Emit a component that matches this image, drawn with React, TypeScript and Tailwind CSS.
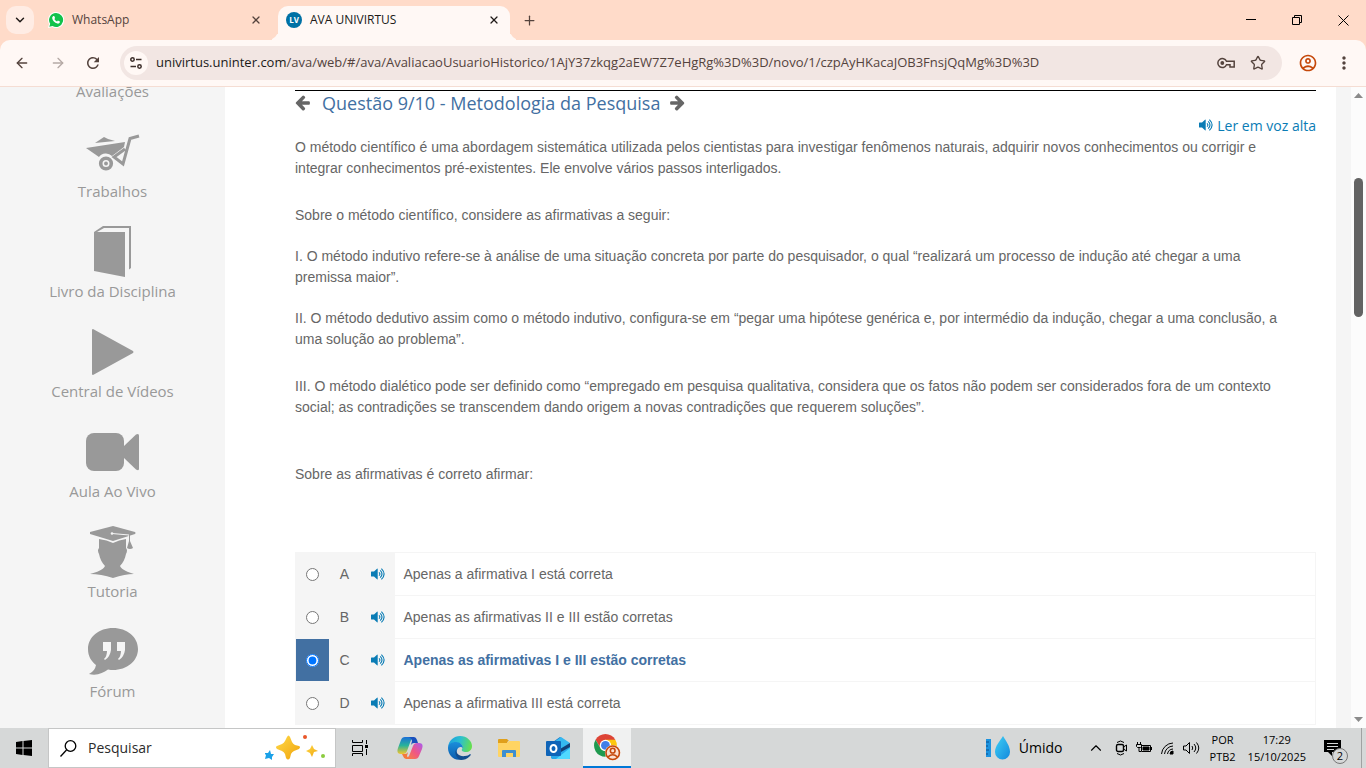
import type { ReactNode } from "react";
import { ArrowLeft, ArrowRight, ChevronDown, ChevronUp, Plus, Star, X } from "lucide-react";
import {
  MdOutlineAccountCircle,
  MdMoreVert,
  MdRefresh,
} from "react-icons/md";

const SIDEBAR_ITEMS: { label: string; icon: ReactNode }[] = [
  { label: "Trabalhos", icon: <WheelbarrowIcon /> },
  { label: "Livro da Disciplina", icon: <BookIcon /> },
  { label: "Central de Vídeos", icon: <PlayIcon /> },
  { label: "Aula Ao Vivo", icon: <CameraIcon /> },
  { label: "Tutoria", icon: <TutorIcon /> },
  { label: "Fórum", icon: <ForumIcon /> },
];

const OPTIONS = [
  { letter: "A", text: "Apenas a afirmativa I está correta" },
  { letter: "B", text: "Apenas as afirmativas II e III estão corretas" },
  { letter: "C", text: "Apenas as afirmativas I e III estão corretas" },
  { letter: "D", text: "Apenas a afirmativa III está correta" },
];

const SELECTED = "C";

function WheelbarrowIcon() {
  return (
    <svg width="54" height="37" viewBox="0 0 54 37" fill="#999">
      <path d="m9 9 6-4 3-2 4 2 7 2z" />
      <path d="M0 14 39 8l-1 5-12 9a8.500 8.500 0 0 0-13 1z" />
      <circle cx="20" cy="29.500" r="5.300" fill="none" stroke="#999" strokeWidth="3.600" />
      <circle cx="20" cy="29.500" r="1.900" />
      <path
        d="M53 2 44 4.500 37 30l-9-7 11-8"
        fill="none"
        stroke="#999"
        strokeWidth="3"
      />
    </svg>
  );
}

function BookIcon() {
  return (
    <svg width="38" height="52" viewBox="0 0 38 52" fill="#999">
      <path d="M0 6h31v45L0 45z" />
      <path d="M0 6 9 0h28v42l-2 1.500V2H10L3 6z" />
    </svg>
  );
}

function PlayIcon() {
  return (
    <svg width="42" height="46" viewBox="0 0 42 46" fill="#999">
      <path d="M0 1Q0 0 1 0L41 22q1 1 0 2L1 46Q0 46 0 45z" />
    </svg>
  );
}

function CameraIcon() {
  return (
    <svg width="54" height="38" viewBox="0 0 54 38" fill="#999">
      <rect width="38" height="38" rx="8" />
      <path d="M38 13 50 1.500q3-1.500 3 1V36q0 2-3 .500L38 25z" />
    </svg>
  );
}

function TutorIcon() {
  return (
    <svg width="46" height="52" viewBox="0 0 46 52" fill="#999">
      <path d="M9 13q8 1 14 4 6-3 13-4v9q2 2 0 6c-1 5-3 9-6 12 2 4 8 6 14 8q-9 0-21 4-12-4-23-4c7-2 13-4 15-8-3-3-5-7-6-12q-2-4 0-6z" />
      <path d="m23 0 22 6q1 1 0 2l-22 7L0 8Q-1 7 0 6z" />
      <path d="M22 7.500 39 9v3" fill="none" stroke="#f5f5f5" strokeWidth="1" />
      <circle cx="22" cy="7.500" r="1.300" fill="#f5f5f5" />
      <path d="M39 9h1v6l3 7q-3 2-6 0l2-7z" />
    </svg>
  );
}

function ForumIcon() {
  return (
    <svg width="50" height="48" viewBox="0 0 50 48">
      <path
        fill="#999"
        d="M25 0c14 0 25 9 25 21S39 42 25 42q-2 0-5-.500C15 45 9 48 1 46q6-3 7-9C3 33 0 28 0 21 0 9 11 0 25 0z"
      />
      <path
        fill="#f5f5f5"
        d="M15 14h8v8q-1 7-6 10l-1-1q3-3 3-8h-4zM29 14h8v8q-1 7-6 10l-1-1q3-3 3-8h-4z"
      />
    </svg>
  );
}

function PrevArrow() {
  return (
    <svg width="15" height="16" viewBox="0 128 1536 1664" fill="currentColor">
      <path d="M1536 896v128q0 53-32.500 90.500T1419 1152H715l293 294q38 36 38 90t-38 90l-75 76q-37 37-90 37-52 0-91-37L101 1050q-37-37-37-90 0-52 37-91l651-650q38-38 91-38 52 0 90 38l75 74q38 38 38 91t-38 91L715 768h704q52 0 84.500 37.500T1536 896z" />
    </svg>
  );
}

function NextArrow() {
  return (
    <svg width="15" height="16" viewBox="0 128 1536 1664" fill="currentColor">
      <path d="M1472 960q0 54-37 91l-651 651q-39 37-91 37-51 0-90-37l-75-75q-38-38-38-91t38-91l293-293H117q-52 0-84.500-37.500T0 1024V896q0-53 32.500-90.500T117 768h704L528 474q-38-36-38-90t38-90l75-75q38-38 90-38 53 0 91 38l651 651q37 35 37 90z" />
    </svg>
  );
}

function VolumeIcon() {
  return (
    <svg width="14" height="12" viewBox="0 0 14 12" fill="currentColor">
      <path d="M0 4q0-.500.500-.500H3L6 .700q.700-.500.700.300v10q0 .800-.700.300L3 8.500H.500Q0 8.500 0 8z" />
      <path
        d="M8 4.300q1.800 1.700 0 3.400M9.200 2.400q3.600 3.600 0 7.200M10.400.600q5.400 5.400 0 10.800"
        fill="none"
        stroke="currentColor"
        strokeWidth="1.100"
      />
    </svg>
  );
}

function WhatsAppIcon() {
  return (
    <svg width="16" height="16" viewBox="0 0 16 16">
      <path fill="#fff" d="M8 0a8 8 0 1 1-3.700 15L0 16l1.100-4A8 8 0 0 1 8 0z" />
      <path fill="#12c24b" d="M8 1a7 7 0 1 1-3.500 13l-3.200.800.900-3A7 7 0 0 1 8 1z" />
      <path
        fill="#fff"
        d="M5.300 4h.900l.9 2-.7 1c.6 1.200 1.400 2 2.600 2.500l.9-.900 2 1v.700c-.4 1-1.400 1.500-2.400 1.300C6.500 11 4.600 8.800 4.200 6.300 4.100 5.300 4.600 4.500 5.300 4z"
      />
    </svg>
  );
}

function TuneIcon() {
  return (
    <svg width="12" height="12" viewBox="0 0 12 12" fill="none" stroke="#3b2d29" strokeWidth="1.500">
      <circle cx="2.500" cy="2.500" r="1.700" />
      <path d="M6 2.500h5.500M.5 9.500H6" />
      <circle cx="9.500" cy="9.500" r="1.700" />
    </svg>
  );
}

function KeyIcon() {
  return (
    <svg width="19" height="12" viewBox="0 0 19 12" fill="none" stroke="#54433d" strokeWidth="1.500">
      <path d="M9.500 4.300A4.500 4.500 0 1 0 9.500 7.800H13V10h4.200V4.300z" />
      <circle cx="5.300" cy="6" r="1.900" fill="#54433d" stroke="none" />
    </svg>
  );
}

function ChromeTabs() {
  return (
    <header className="flex h-10 shrink-0 items-end bg-[#ffdbc9] text-xs text-[#54433d]">
      <button
        aria-label="Pesquisar guias"
        className="mb-1.5 ml-1.5 flex size-7 items-center justify-center rounded-[10px] bg-[#ffece4] text-[#201a18]"
      >
        <ChevronDown size={14} strokeWidth={2.5} />
      </button>
      <div className="flex h-[34px] w-[244px] items-center pr-4 pb-1.5 pl-3.5">
        <WhatsAppIcon />
        <span className="ml-2 flex-1">WhatsApp</span>
        <button aria-label="Fechar WhatsApp">
          <X size={12} strokeWidth={2.5} />
        </button>
      </div>
      <div className="relative flex h-[34px] w-[232px] items-center rounded-t-[10px] bg-[#fff8f5] pr-2.5 pb-1.5 pl-2 text-[#201a18] before:absolute before:bottom-0 before:-left-2.5 before:size-2.5 before:rounded-br-[10px] before:shadow-[4px_4px_0_0_#fff8f5] after:absolute after:-right-2.5 after:bottom-0 after:size-2.5 after:rounded-bl-[10px] after:shadow-[-4px_4px_0_0_#fff8f5]">
        <span className="flex size-4 items-center justify-center rounded-full bg-[#0071a5] text-[8px] font-bold text-white">
          LV
        </span>
        <span className="ml-2 flex-1">AVA UNIVIRTUS</span>
        <button aria-label="Fechar AVA UNIVIRTUS">
          <X size={12} strokeWidth={2.5} />
        </button>
      </div>
      <button aria-label="Nova guia" className="ml-3 self-center">
        <Plus size={15} />
      </button>
      <div className="ml-auto flex items-center gap-9 self-center pr-[17px] text-black">
        <button aria-label="Minimizar">
          <svg width="10" height="10" viewBox="0 0 10 10">
            <path d="M0 4.500h10" stroke="currentColor" />
          </svg>
        </button>
        <button aria-label="Restaurar">
          <svg width="10" height="10" viewBox="0 0 10 10" fill="none" stroke="currentColor">
            <path d="M.5 2.500h7v7h-7zM2.500 2V.5h7v7H8" />
          </svg>
        </button>
        <button aria-label="Fechar">
          <svg width="11" height="11" viewBox="0 0 11 11">
            <path d="m.5.5 10 10m0-10-10 10" stroke="currentColor" />
          </svg>
        </button>
      </div>
    </header>
  );
}

function ChromeToolbar() {
  return (
    <div className="shrink-0 bg-[#ffdbc9]">
      <nav className="flex h-[47px] items-center rounded-t-[10px] border-b border-[#f5ddd3] bg-[#fff8f5] pr-3 pl-3.5 text-[#54433d]">
        <button aria-label="Voltar">
          <ArrowLeft size={16} />
        </button>
        <button aria-label="Avançar" className="ml-5 text-[#b5a9a5]">
          <ArrowRight size={16} />
        </button>
        <button aria-label="Recarregar" className="ml-[18px]">
          <MdRefresh size={18} />
        </button>
        <div className="ml-[18px] flex h-[34px] flex-1 items-center rounded-full bg-[#f2e6e3] pr-4 pl-1">
          <button
            aria-label="Informações do site"
            className="flex size-6 items-center justify-center rounded-full bg-[#fff8f5]"
          >
            <TuneIcon />
          </button>
          <span className="ml-2 flex-1 text-[13px] whitespace-nowrap text-[#54433d]">
            <span className="text-[#201a18]">univirtus.uninter.com</span>
            /ava/web/#/ava/AvaliacaoUsuarioHistorico/1AjY37zkqg2aEW7Z7eHgRg%3D%3D/novo/1/czpAyHKacaJOB3FnsjQqMg%3D%3D
          </span>
          <button aria-label="Senhas">
            <KeyIcon />
          </button>
          <button aria-label="Favoritar" className="ml-3.5">
            <Star size={16} strokeWidth={2} />
          </button>
        </div>
        <button aria-label="Perfil" className="ml-4 text-[#c5480a]">
          <MdOutlineAccountCircle size={20} />
        </button>
        <button aria-label="Menu" className="ml-4">
          <MdMoreVert size={20} />
        </button>
      </nav>
    </div>
  );
}

function Sidebar() {
  return (
    <aside className="w-[225px] shrink-0 overflow-hidden bg-[#f5f5f5] text-[15px] text-[#999]">
      <ul className="-mt-2 text-center">
        <li className="leading-6">
          <a href="#avaliacoes">Avaliações</a>
        </li>
        {SIDEBAR_ITEMS.map((item) => (
          <li key={item.label}>
            <a href={`#${item.label}`} className="block pt-[22px]">
              <span className="flex h-[54px] items-center justify-center">{item.icon}</span>
              <span className="block leading-6">{item.label}</span>
            </a>
          </li>
        ))}
      </ul>
    </aside>
  );
}

function Question() {
  return (
    <main className="min-w-0 flex-1 overflow-hidden bg-white pt-[3px] pr-5 pl-[70px]">
      <div className="border-t border-black">
        <h1 className="flex h-6 items-center text-[18px] text-[#4270a2]">
          <button aria-label="Questão anterior" className="text-[#666]">
            <PrevArrow />
          </button>
          <span className="mr-2.5 ml-3">Questão 9/10 - Metodologia da Pesquisa</span>
          <button aria-label="Próxima questão" className="text-[#666]">
            <NextArrow />
          </button>
        </h1>
      </div>
      <div className="mb-0.5 flex h-5 justify-end text-[14px] text-[#0a7cb5]">
        <button className="flex items-center gap-1">
          <VolumeIcon />
          Ler em voz alta
        </button>
      </div>

      <div className="font-['Liberation_Sans',Arial,sans-serif] text-[14px] whitespace-nowrap text-[#666]">
        <p className="leading-[21px]">
          O método científico é uma abordagem sistemática utilizada pelos cientistas para investigar fenômenos naturais, adquirir novos conhecimentos ou corrigir e
          <br />
          integrar conhecimentos pré-existentes. Ele envolve vários passos interligados.
        </p>
        <p className="mt-[26px] leading-[21px]">Sobre o método científico, considere as afirmativas a seguir:</p>
        <p className="mt-5 leading-[21px]">
          I. O método indutivo refere-se à análise de uma situação concreta por parte do pesquisador, o qual “realizará um processo de indução até chegar a uma
          <br />
          premissa maior”.
        </p>
        <p className="mt-5 leading-[21px]">
          II. O método dedutivo assim como o método indutivo, configura-se em “pegar uma hipótese genérica e, por intermédio da indução, chegar a uma conclusão, a
          <br />
          uma solução ao problema”.
        </p>
        <p className="mt-[26px] leading-[21px]">
          III. O método dialético pode ser definido como “empregado em pesquisa qualitativa, considera que os fatos não podem ser considerados fora de um contexto
          <br />
          social; as contradições se transcendem dando origem a novas contradições que requerem soluções”.
        </p>
        <p className="mt-[46px] leading-[21px]">Sobre as afirmativas é correto afirmar:</p>

        <table className="mt-[67px] w-full border-collapse">
          <tbody>
            {OPTIONS.map((option) => {
              const selected = option.letter === SELECTED;
              const id = `option-${option.letter}`;
              return (
                <tr key={option.letter} className="h-[43px] border border-[#f5f5f5]">
                  <td className={selected ? "w-[33px] bg-[#4270a2]" : "w-[33px] bg-[#f5f5f5]"}>
                    <input
                      id={id}
                      type="radio"
                      name="answer"
                      defaultChecked={selected}
                      className="mx-auto block size-[13px]"
                    />
                  </td>
                  <td className="w-8 bg-[#f5f5f5] text-center">{option.letter}</td>
                  <td className="w-[34px] bg-[#f5f5f5] text-[#0a7cb5]">
                    <button aria-label={`Ouvir ${option.letter}`} className="mx-auto block">
                      <VolumeIcon />
                    </button>
                  </td>
                  <td className="pl-[9px]">
                    <label htmlFor={id} className={selected ? "font-bold text-[#4270a2]" : ""}>
                      {option.text}
                    </label>
                  </td>
                </tr>
              );
            })}
          </tbody>
        </table>
      </div>
    </main>
  );
}

function Scrollbar() {
  return (
    <div className="flex w-[15px] shrink-0 flex-col items-center bg-[#fcfcfc] py-1.5">
      <svg width="9" height="5" viewBox="0 0 9 5" fill="#8b8b8b">
        <path d="M4.500 0 9 5H0z" />
      </svg>
      <div className="mt-20 h-[139px] w-[9px] rounded-full bg-[#636363]" />
      <svg width="9" height="5" viewBox="0 0 9 5" fill="#8b8b8b" className="mt-auto">
        <path d="M0 0h9L4.500 5z" />
      </svg>
    </div>
  );
}

function SparklesArt() {
  return (
    <svg width="62" height="28" viewBox="0 0 62 28">
      <defs>
        <linearGradient id="gold" x1="0" y1="0" x2="1" y2="1">
          <stop offset="0" stopColor="#ffda4a" />
          <stop offset="1" stopColor="#f0a30a" />
        </linearGradient>
      </defs>
      <path
        fill="url(#gold)"
        d="M22 3q1.500-3 3 0l2 5q1 2 3 3l4 1q2 1 0 3l-5 2q-2 1-3 3l-1 4q-2 3-4 0l-1-4q-1-2-3-3l-5-2q-2-2 0-3l5-2q2-1 3-3z"
      />
      <path fill="url(#gold)" d="m47 11 2 4 4 2-4 1-2 5-2-4-4-2 4-2z" />
      <path fill="#1ba1e8" d="m5 16 1 4 3 0-2 3 0 3-3-2-4 1 1-4-2-2 4 0z" />
      <circle cx="40" cy="3" r="2" fill="#e9572a" />
      <circle cx="58" cy="22" r="2" fill="#8bcb3f" />
    </svg>
  );
}

function TaskViewIcon() {
  return (
    <svg width="17" height="16" viewBox="0 0 17 16" fill="none" stroke="#000">
      <path d="M.5 0v2.500h10V0M.5 5.500h10v6H.5zM.5 16v-2.500h10V16M14.500 0v4M14.500 9v6" />
      <path d="M13 5h3v3h-3z" fill="#000" stroke="none" />
    </svg>
  );
}

function CopilotIcon() {
  return (
    <svg width="26" height="24" viewBox="0 0 26 24">
      <defs>
        <linearGradient id="cp1" x1="0" y1="0" x2="0" y2="1">
          <stop offset="0" stopColor="#1b6fd8" />
          <stop offset=".5" stopColor="#28b39a" />
          <stop offset="1" stopColor="#f5c52a" />
        </linearGradient>
        <linearGradient id="cp2" x1="1" y1="0" x2="0" y2="1">
          <stop offset="0" stopColor="#a95cf0" />
          <stop offset=".5" stopColor="#ef5686" />
          <stop offset="1" stopColor="#f9843a" />
        </linearGradient>
      </defs>
      <path fill="url(#cp1)" d="M8 1h9l-3 3-4 11q-1 3-4 3H4q-5 0-3-6l3-8q1-3 4-3z" />
      <path fill="#1950bd" d="M12 1h5q2 0 3 3l1 3h-4q-2 0-3 2l1-4q-1-4-4-4z" />
      <path fill="url(#cp2)" d="M18 23H9l3-3 4-10q1-3 4-3h2q5 0 3 6l-3 7q-1 3-4 3z" />
      <path fill="#f5793b" d="M14 23H9q-2 0-3-3l-1-2h3q2 0 3-2l-1 4q1 3 4 3z" />
    </svg>
  );
}

function EdgeIcon() {
  return (
    <svg width="24" height="24" viewBox="0 0 24 24">
      <defs>
        <linearGradient id="edgeTop" x1="0" y1=".3" x2="1" y2=".5">
          <stop offset="0" stopColor="#1c9fe0" />
          <stop offset=".5" stopColor="#2cc0cd" />
          <stop offset="1" stopColor="#66df4d" />
        </linearGradient>
        <linearGradient id="edgeLow" x1="0" y1="0" x2="0" y2="1">
          <stop offset="0" stopColor="#1b8edb" />
          <stop offset="1" stopColor="#0b5cad" />
        </linearGradient>
      </defs>
      <path fill="url(#edgeTop)" d="M0 11C1 4 6 0 12 0c7 0 12 5 12 10 0 4-3 6-6 6-3 0-5-1-4-3 2-3-1-6-5-6-4 0-8 2-9 4z" />
      <path fill="url(#edgeLow)" d="M0 12c0-4 4-6 8-6 4 0 7 3 7 6-2-2-5-1-6 2-1 4 2 8 6 9C6 26 0 19 0 12z" />
      <path fill="#124d8f" d="M9 12c-3 5 3 9 8 8 2 0 4-1 5-2 1 0 1 1 0 2-3 3-6 4-9 4-4-1-8-7-4-12z" />
    </svg>
  );
}

function FolderIcon() {
  return (
    <svg width="22" height="19" viewBox="0 0 22 19">
      <path fill="#e0a01b" d="M0 1q0-1 1-1h8l2 2h-1L9 4H0z" />
      <path fill="#ffd463" d="M0 4h9l2-2h10q1 0 1 1v14q0 1-1 1H1q-1 0-1-1z" />
      <path fill="#3e8fd0" d="M4 18v-6q0-1 1-1h12q1 0 1 1v6h-3v-4H8v4z" />
    </svg>
  );
}

function OutlookIcon() {
  return (
    <svg width="25" height="23" viewBox="0 0 25 23">
      <path fill="#1478c8" d="M4 7 14 0l10 7v5H4z" />
      <path fill="#35b8f1" d="M8 5 15 0l9 6-8 7z" />
      <path fill="#123f78" d="M24 6v6l-10 5v-5z" />
      <path fill="#28a8ea" d="M5 21V11l10 4 9-5v11q0 1-1 1H6z" />
      <path fill="#50d9ff" d="m10 22 14-11v10q0 1-1 1z" />
      <rect y="4" width="15" height="15" rx="1" fill="#0f64b8" />
      <ellipse cx="7.500" cy="11.500" rx="3" ry="3.500" fill="none" stroke="#fff" strokeWidth="2" />
    </svg>
  );
}

function ChromeIcon() {
  return (
    <svg width="28" height="28" viewBox="0 0 54 54">
      <path fill="#dd4436" d="M24 24 4.950 13a22 22 0 0 1 38.100 0z" />
      <path fill="#dd4436" d="m4.950 13 9.500 16.500L24 24 24 13z" />
      <path fill="#209a4f" d="M4.950 13A22 22 0 0 0 24 46l9.500-16.500L24 24l-9.500 5.500z" />
      <path fill="#fdc70e" d="M24 46a22 22 0 0 0 19.050-33H24v11l9.500 5.500z" />
      <circle cx="24" cy="24" r="11" fill="#fff" />
      <circle cx="24" cy="24" r="8.500" fill="#3f7ee8" />
      <circle cx="38" cy="38" r="15" fill="#fbe0d0" />
      <g fill="none" stroke="#c5480a" strokeWidth="3">
        <circle cx="38" cy="38" r="13" />
        <circle cx="38" cy="34" r="4.500" />
        <path d="M29 46q9-8 18 0" />
      </g>
    </svg>
  );
}

function HumidityIcon() {
  return (
    <svg width="25" height="24" viewBox="0 0 25 24">
      <defs>
        <linearGradient id="drop" x1="0" y1="0" x2="1" y2="1">
          <stop offset="0" stopColor="#3fd0f5" />
          <stop offset="1" stopColor="#1389dd" />
        </linearGradient>
      </defs>
      <path fill="#1c93df" d="M0 3h5v18H0z" />
      <path d="M0 6h3M0 10h2M0 14h3M0 18h2" stroke="#0d4f8f" />
      <path fill="url(#drop)" d="M17 0c3 5 7 10 7 16a7.500 7.500 0 0 1-15 0C9 10 14 5 17 0z" />
    </svg>
  );
}

function TrayIcons() {
  return (
    <div className="flex items-center gap-2 text-black">
      <button aria-label="Mostrar ícones ocultos" className="mr-0.5">
        <ChevronUp size={18} strokeWidth={1.5} />
      </button>
      <svg width="13" height="16" viewBox="0 0 13 16" fill="none" stroke="currentColor">
        <rect x="1.500" y="4.500" width="7" height="7" rx="1.500" strokeWidth="1.400" />
        <path d="m8.500 7 3-2v6l-3-2M2 2.500q3.500-3 7 0M2 13.500q3.500 3 7 0" />
      </svg>
      <svg width="17" height="12" viewBox="0 0 17 12" fill="none" stroke="currentColor">
        <path d="M5.500 3.500h9v6h-9zM15.500 5v3" />
        <path d="M7 5h6v3H7z" fill="currentColor" />
        <path d="M1.500 0v2M4.500 0v2M.5 2.500h5v2l-1 1h-3l-1-1zM3 6v3.500h2" />
      </svg>
      <svg width="14" height="13" viewBox="0 0 14 13" fill="none" stroke="currentColor">
        <path d="M.5 12A12 12 0 0 1 12 1M3.500 12A9 9 0 0 1 12 4M6.500 12A6 6 0 0 1 12 7" />
        <path d="M9 12a3 3 0 0 1 3-3v3z" fill="currentColor" />
      </svg>
      <svg width="17" height="14" viewBox="0 0 17 14" fill="none" stroke="currentColor">
        <path d="M.5 5v4h2.500l3.500 3.500v-11L3 5zM9 5q1.500 2 0 4M11 3q3.500 4 0 8M13.500 1.500q4.500 5.500 0 11" />
      </svg>
    </div>
  );
}

function Taskbar() {
  return (
    <footer className="flex h-10 shrink-0 items-center bg-[#d6d8d8] text-black">
      <button aria-label="Iniciar" className="flex w-12 justify-center">
        <svg width="16" height="16" viewBox="0 0 16 16">
          <path d="m0 2 6.500-1v6.500H0zM7.500 1 16 0v7.500H7.500zM0 8.500h6.500V15L0 14zM7.500 8.500H16V16l-8.500-1z" />
        </svg>
      </button>
      <div className="flex h-10 w-72 items-center border border-[#c5c6c6] bg-white pr-2 pl-[11px]">
        <svg width="17" height="17" viewBox="0 0 17 17" fill="none" stroke="#000" strokeWidth="1.300">
          <circle cx="10.500" cy="6" r="5.300" />
          <path d="M6.500 10 .5 16.500" />
        </svg>
        <input
          aria-label="Pesquisar"
          placeholder="Pesquisar"
          className="ml-[11px] w-0 flex-1 text-sm outline-none placeholder:text-[#2b2b2b]"
        />
        <SparklesArt />
      </div>
      <div className="flex h-full items-stretch">
        <button aria-label="Visão de tarefas" className="flex w-12 items-center justify-center">
          <TaskViewIcon />
        </button>
        <button aria-label="Copilot" className="flex w-[51px] items-center justify-center">
          <CopilotIcon />
        </button>
        <button aria-label="Edge" className="flex w-[49px] items-center justify-center">
          <EdgeIcon />
        </button>
        <button aria-label="Explorador de Arquivos" className="flex w-[49px] items-center justify-center">
          <FolderIcon />
        </button>
        <button aria-label="Outlook" className="flex w-[50px] items-center justify-center">
          <OutlookIcon />
        </button>
        <button
          aria-label="Chrome"
          className="flex w-12 items-center justify-center border-b-2 border-[#0078d7] bg-[#f0f1f1]"
        >
          <ChromeIcon />
        </button>
      </div>
      <div className="ml-auto flex h-full items-center border-r border-transparent">
        <HumidityIcon />
        <span className="mr-6 ml-2 text-sm">Úmido</span>
        <TrayIcons />
        <div className="ml-2.5 flex gap-3 text-center text-[11px] leading-[17px]">
          <p>
            POR
            <br />
            PTB2
          </p>
          <p>
            17:29
            <br />
            15/10/2025
          </p>
        </div>
        <button aria-label="Notificações" className="relative mr-5 ml-[18px]">
          <svg width="17" height="16" viewBox="0 0 17 16">
            <path d="M0 0h17v12H8v4l-4-4H0z" />
            <path d="M3 3.500h11M3 6.500h11M3 9.500h7" stroke="#d6d8d8" />
          </svg>
          <span className="absolute top-2 left-2 flex size-4 items-center justify-center rounded-full border border-[#777] bg-[#d6d8d8] text-[11px]">
            2
          </span>
        </button>
        <button aria-label="Mostrar área de trabalho" className="h-full w-1 border-l border-[#a0a2a2]" />
      </div>
    </footer>
  );
}

export default function App() {
  return (
    <div className="flex h-screen flex-col overflow-hidden font-['Open_Sans','Noto_Sans',sans-serif]">
      <ChromeTabs />
      <ChromeToolbar />
      <div className="flex min-h-0 flex-1">
        <Sidebar />
        <Question />
        <div className="w-[15px] shrink-0 bg-[#f5f5f5]" />
        <Scrollbar />
      </div>
      <Taskbar />
    </div>
  );
}
